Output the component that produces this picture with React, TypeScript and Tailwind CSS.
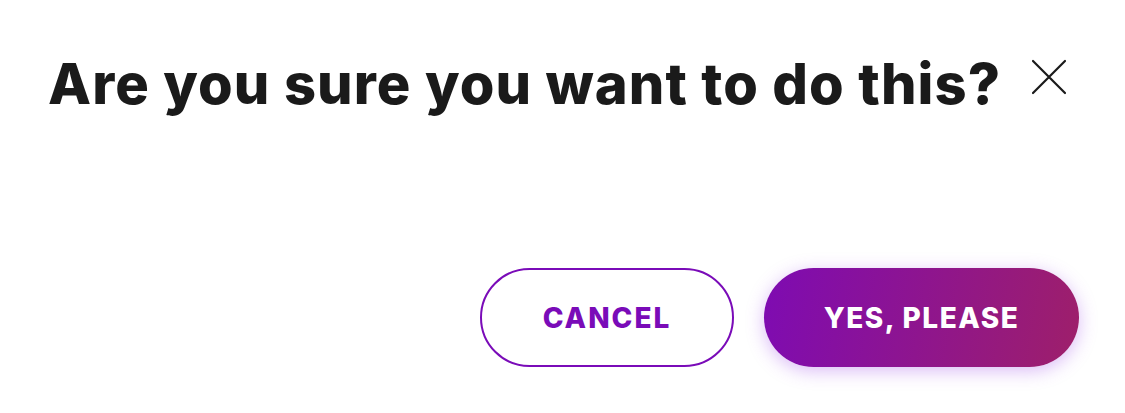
import React from "react";

export default function App() {
  return (
    <div className="w-[1125px] h-[413px] bg-white relative" style={{ fontFamily: "Inter, 'Noto Sans', sans-serif" }}>
      <div className="flex items-start pl-[48px] pt-[50px]">
        <h1 className="text-[56px] leading-[68px] font-extrabold text-[#1a1a1a] tracking-[1.1px]">
          Are you sure you want to do this?
        </h1>
        <button className="ml-[30px] mt-[9px] w-[36px] h-[36px] flex items-center justify-center">
          <svg width="36" height="36" viewBox="0 0 36 36" fill="none" stroke="#1a1a1a" strokeWidth="2.2" strokeLinecap="round">
            <path d="M2 2 L34 34 M34 2 L2 34" />
          </svg>
        </button>
      </div>
      <div className="flex justify-end gap-[30px] pr-[46px] mt-[150px]">
        <button className="w-[254px] h-[99px] rounded-full border-2 border-[#7a0bb8] text-[#7a0bb8] text-[28px] font-extrabold tracking-[2px]">
          CANCEL
        </button>
        <button className="w-[315px] h-[99px] rounded-full bg-[linear-gradient(100deg,#7e0bb2,#9e1f6a)] text-white text-[28px] font-extrabold tracking-[1.5px] shadow-[0_4px_18px_rgba(150,60,230,0.35)]">
          YES, PLEASE
        </button>
      </div>
    </div>
  );
}
